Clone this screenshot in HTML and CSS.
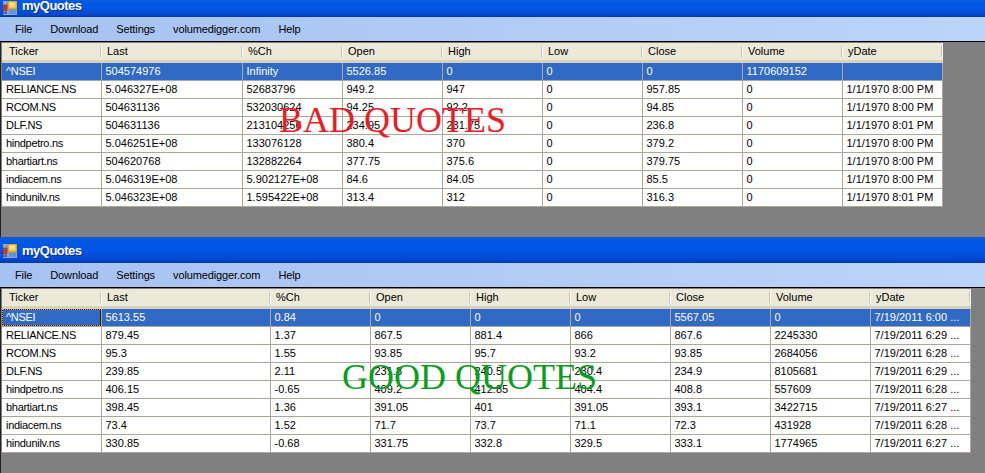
FILE: index.html
```html
<!DOCTYPE html>
<html lang="en">
<head>
<meta charset="utf-8">
<title>myQuotes</title>
<link rel="stylesheet" href="styles.css">
</head>
<body>
<section class="window window-bad">
  <header class="titlebar titlebar-cut">
    <svg class="appicon" viewBox="0 0 14 14" aria-hidden="true"><rect width="14" height="14" fill="#8fa6cf"/><rect x="5" y="0" width="9" height="8" fill="#f4c63a" stroke="#a8842a" stroke-width=".8"/><rect x="6.5" y="1.5" width="5" height="4" fill="#fde28a"/><rect x="0" y="4" width="4" height="6" fill="#d8362a" stroke="#8a2a20" stroke-width=".6"/><rect x="6" y="9" width="7" height="4" fill="#5f92d6"/><rect x="0" y="11" width="4" height="2" fill="#46659f"/></svg>
    <span>myQuotes</span>
  </header>
  <nav class="menubar"><span>File</span><span>Download</span><span>Settings</span><span>volumedigger.com</span><span>Help</span></nav>
  <div class="client">
    <div class="grid">
      <div class="row head"><div>Ticker</div><div>Last</div><div>%Ch</div><div>Open</div><div>High</div><div>Low</div><div>Close</div><div>Volume</div><div>yDate</div></div>
      <div class="row sel"><div>^NSEI</div><div>504574976</div><div>Infinity</div><div>5526.85</div><div>0</div><div>0</div><div>0</div><div>1170609152</div><div></div></div>
      <div class="row"><div>RELIANCE.NS</div><div>5.046327E+08</div><div>52683796</div><div>949.2</div><div>947</div><div>0</div><div>957.85</div><div>0</div><div>1/1/1970 8:00 PM</div></div>
      <div class="row"><div>RCOM.NS</div><div>504631136</div><div>532030624</div><div>94.25</div><div>92.2</div><div>0</div><div>94.85</div><div>0</div><div>1/1/1970 8:00 PM</div></div>
      <div class="row"><div>DLF.NS</div><div>504631136</div><div>213104256</div><div>234.95</div><div>231.75</div><div>0</div><div>236.8</div><div>0</div><div>1/1/1970 8:01 PM</div></div>
      <div class="row"><div>hindpetro.ns</div><div>5.046251E+08</div><div>133076128</div><div>380.4</div><div>370</div><div>0</div><div>379.2</div><div>0</div><div>1/1/1970 8:00 PM</div></div>
      <div class="row"><div>bhartiart.ns</div><div>504620768</div><div>132882264</div><div>377.75</div><div>375.6</div><div>0</div><div>379.75</div><div>0</div><div>1/1/1970 8:00 PM</div></div>
      <div class="row"><div>indiacem.ns</div><div>5.046319E+08</div><div>5.902127E+08</div><div>84.6</div><div>84.05</div><div>0</div><div>85.5</div><div>0</div><div>1/1/1970 8:00 PM</div></div>
      <div class="row"><div>hindunilv.ns</div><div>5.046323E+08</div><div>1.595422E+08</div><div>313.4</div><div>312</div><div>0</div><div>316.3</div><div>0</div><div>1/1/1970 8:01 PM</div></div>
    </div>
  </div>
  <p class="stamp stamp-bad">BAD QUOTES</p>
</section>
<section class="window window-good">
  <header class="titlebar">
    <svg class="appicon" viewBox="0 0 14 14" aria-hidden="true"><rect width="14" height="14" fill="#8fa6cf"/><rect x="5" y="0" width="9" height="8" fill="#f4c63a" stroke="#a8842a" stroke-width=".8"/><rect x="6.5" y="1.5" width="5" height="4" fill="#fde28a"/><rect x="0" y="4" width="4" height="6" fill="#d8362a" stroke="#8a2a20" stroke-width=".6"/><rect x="6" y="9" width="7" height="4" fill="#5f92d6"/><rect x="0" y="11" width="4" height="2" fill="#46659f"/></svg>
    <span>myQuotes</span>
  </header>
  <nav class="menubar"><span>File</span><span>Download</span><span>Settings</span><span>volumedigger.com</span><span>Help</span></nav>
  <div class="client">
    <div class="grid">
      <div class="row head"><div>Ticker</div><div>Last</div><div>%Ch</div><div>Open</div><div>High</div><div>Low</div><div>Close</div><div>Volume</div><div>yDate</div></div>
      <div class="row sel"><div class="focus">^NSEI</div><div>5613.55</div><div>0.84</div><div>0</div><div>0</div><div>0</div><div>5567.05</div><div>0</div><div>7/19/2011 6:00 ...</div></div>
      <div class="row"><div>RELIANCE.NS</div><div>879.45</div><div>1.37</div><div>867.5</div><div>881.4</div><div>866</div><div>867.6</div><div>2245330</div><div>7/19/2011 6:29 ...</div></div>
      <div class="row"><div>RCOM.NS</div><div>95.3</div><div>1.55</div><div>93.85</div><div>95.7</div><div>93.2</div><div>93.85</div><div>2684056</div><div>7/19/2011 6:28 ...</div></div>
      <div class="row"><div>DLF.NS</div><div>239.85</div><div>2.11</div><div>231.8</div><div>240.5</div><div>230.4</div><div>234.9</div><div>8105681</div><div>7/19/2011 6:29 ...</div></div>
      <div class="row"><div>hindpetro.ns</div><div>406.15</div><div>-0.65</div><div>409.2</div><div>412.85</div><div>404.4</div><div>408.8</div><div>557609</div><div>7/19/2011 6:28 ...</div></div>
      <div class="row"><div>bhartiart.ns</div><div>398.45</div><div>1.36</div><div>391.05</div><div>401</div><div>391.05</div><div>393.1</div><div>3422715</div><div>7/19/2011 6:27 ...</div></div>
      <div class="row"><div>indiacem.ns</div><div>73.4</div><div>1.52</div><div>71.7</div><div>73.7</div><div>71.1</div><div>72.3</div><div>431928</div><div>7/19/2011 6:28 ...</div></div>
      <div class="row"><div>hindunilv.ns</div><div>330.85</div><div>-0.68</div><div>331.75</div><div>332.8</div><div>329.5</div><div>333.1</div><div>1774965</div><div>7/19/2011 6:27 ...</div></div>
    </div>
  </div>
  <p class="stamp stamp-good">GOOD QUOTES</p>
</section>
</body>
</html>
```
FILE: styles.css
```css
* { box-sizing: border-box; }
html, body { margin: 0; padding: 0; }
body {
  width: 985px;
  height: 473px;
  overflow: hidden;
  background: #808080;
  font: 11px/18px "Liberation Sans", Arial, sans-serif;
  color: #000;
}
.window { position: relative; display: flex; flex-direction: column; }
.window-bad { height: 237px; --cols: 100px 141px repeat(7, 100px); }
.window-good { height: 236px; --cols: 100px 169px repeat(7, 100px); }
.titlebar {
  height: 26px;
  display: flex;
  align-items: center;
  gap: 5px;
  padding: 1px 0 0 3px;
  background: linear-gradient(#0a5be0 0, #0458e0 12%, #0055e5 50%, #0349d0 85%, #0238a8 100%);
  color: #fff;
  font: bold 13px/18px "Liberation Sans", Arial, sans-serif;
  letter-spacing: -.5px;
  text-shadow: 1px 1px 0 #0a2f8a;
  flex: none;
}
.titlebar-cut { height: 17px; align-items: flex-end; padding: 0 0 2px 3px; overflow: hidden; }
.appicon { width: 14px; height: 14px; flex: none; }
.menubar {
  height: 25px;
  display: flex;
  align-items: center;
  gap: 18px;
  padding-left: 15px;
  background: linear-gradient(90deg, #a6c2f0, #bbd4fa);
  border-bottom: 1px solid #000;
  letter-spacing: -.12px;
  flex: none;
}
.menubar span { white-space: nowrap; }
.client { flex: 1; padding: 1px 0 0 1px; border-left: 1px solid #222; }
.grid { width: max-content; }
.row {
  display: grid;
  grid-template-columns: var(--cols);
  height: 18px;
  background: #fff;
  border-bottom: 1px solid #aca899;
}
.row > div {
  padding-left: 3.5px;
  line-height: 17px;
  border-right: 1px solid #aca899;
  white-space: nowrap;
  overflow: hidden;
}
.row > div:first-child { padding-left: 4px; letter-spacing: -.3px; }
.row.head {
  height: 20px;
  background: #ece9d8;
  border-bottom: 3px solid #d6d2c2;
}
.row.head > div {
  position: relative;
  padding-left: 5px;
  border-right: 0;
  line-height: 17px;
  letter-spacing: 0;
}
.row.head > div:first-child { padding-left: 7px; }
.row.head > div::after {
  content: "";
  position: absolute;
  right: 0;
  top: 3px;
  height: 11px;
  width: 2px;
  background: linear-gradient(90deg, #c7c5b2 50%, #fff 50%);
}
.row.sel { background: #316ac5; color: #fff; }
.row.sel .focus { box-shadow: inset 0 0 0 1px #1a1a1a; outline: 1px dotted #f0a030; outline-offset: -1px; }
.stamp { position: absolute; margin: 0; font-family: "Liberation Serif", "Times New Roman", serif; font-size: 36px; line-height: 40px; white-space: nowrap; }
.stamp-bad { left: 279px; top: 100px; color: #ed1c24; }
.stamp-good { left: 342px; top: 120px; color: #0a9e1e; }
```
